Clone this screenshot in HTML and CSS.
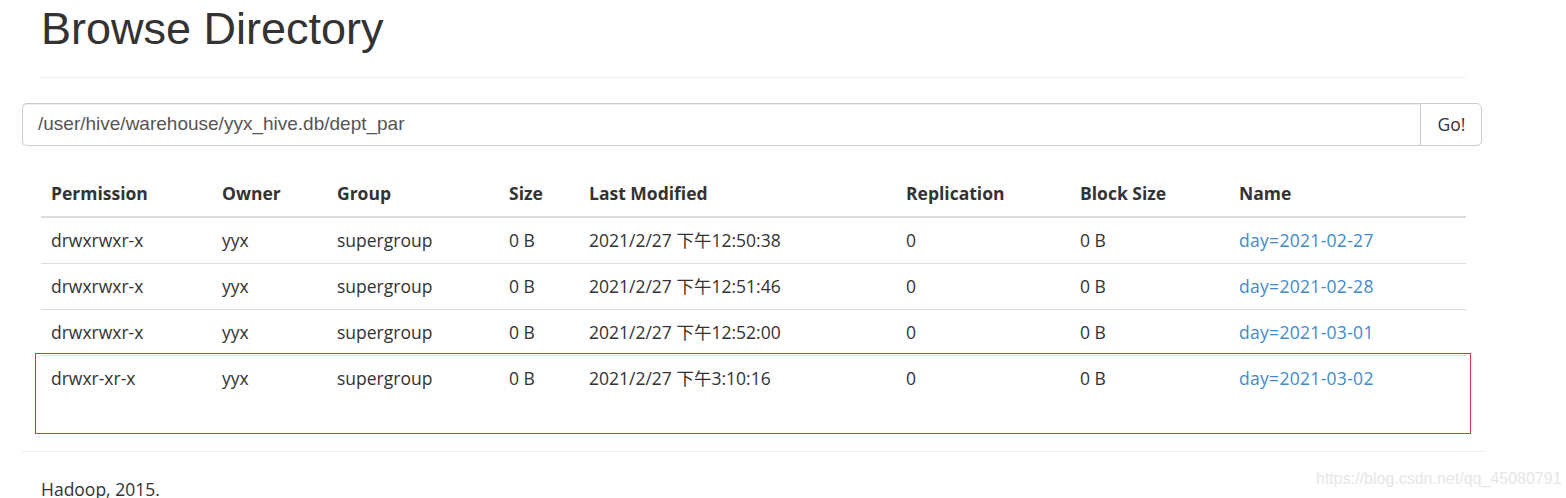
FILE: index.html
```html
<!DOCTYPE html>
<html>
<head>
<meta charset="utf-8">
<title>Browsing HDFS</title>
<link rel="stylesheet" href="styles.css">
</head>
<body>
<div class="container">
  <div class="page-header">
    <h1>Browse Directory</h1>
  </div>
  <div class="row form-row">
    <form class="input-group">
      <input type="text" class="form-control" value="/user/hive/warehouse/yyx_hive.db/dept_par">
      <button class="btn" type="button">Go!</button>
    </form>
  </div>
  <div class="spacer"></div>
  <table class="table">
    <colgroup>
      <col class="c1"><col class="c2"><col class="c3"><col class="c4"><col class="c5"><col class="c6"><col class="c7"><col class="c8">
    </colgroup>
    <thead>
      <tr><th>Permission</th><th>Owner</th><th>Group</th><th>Size</th><th>Last Modified</th><th>Replication</th><th>Block Size</th><th>Name</th></tr>
    </thead>
    <tbody>
      <tr><td>drwxrwxr-x</td><td>yyx</td><td>supergroup</td><td>0 B</td><td>2021/2/27 下午12:50:38</td><td>0</td><td>0 B</td><td><a href="#">day=2021-02-27</a></td></tr>
      <tr><td>drwxrwxr-x</td><td>yyx</td><td>supergroup</td><td>0 B</td><td>2021/2/27 下午12:51:46</td><td>0</td><td>0 B</td><td><a href="#">day=2021-02-28</a></td></tr>
      <tr><td>drwxrwxr-x</td><td>yyx</td><td>supergroup</td><td>0 B</td><td>2021/2/27 下午12:52:00</td><td>0</td><td>0 B</td><td><a href="#">day=2021-03-01</a></td></tr>
      <tr><td>drwxr-xr-x</td><td>yyx</td><td>supergroup</td><td>0 B</td><td>2021/2/27 下午3:10:16</td><td>0</td><td>0 B</td><td><a href="#">day=2021-03-02</a></td></tr>
    </tbody>
  </table>
  <div class="row footer-row">
    <hr>
    <div class="col"><p>Hadoop, 2015.</p></div>
  </div>
</div>
<div class="annotation"></div>
<div class="watermark">https://blog.csdn.net/qq_45080791</div>
</body>
</html>
```

FILE: styles.css
```css
html, body {
  margin: 0;
  padding: 0;
  background: #fff;
  overflow: hidden;
}
body {
  width: 1566px;
  height: 498px;
  position: relative;
  font-family: "Open Sans", "Noto Sans CJK SC", sans-serif;
  font-size: 17.5px;
  line-height: 25px;
  color: #333;
}
.container {
  width: 1425px;
  margin-left: 41px;
  margin-top: -21.25px;
}
.page-header {
  margin: 0 0 25px;
  padding-bottom: 11.25px;
  border-bottom: 1px solid #eee;
}
.page-header h1 {
  margin: 25px 0 12.5px;
  font-family: "Liberation Sans", Arial, sans-serif;
  font-weight: 400;
  font-size: 45px;
  line-height: 49.5px;
  color: #333;
}
.row {
  margin: 0 -18.75px;
  display: flow-root;
}
.form-row {
  margin: 0 0 0 -19px;
  width: 1460px;
}
.input-group {
  display: flex;
  margin: 0;
}
.form-control {
  flex: 1;
  height: 42.5px;
  box-sizing: border-box;
  padding: 7.5px 15px;
  font-family: "Liberation Sans", Arial, sans-serif;
  font-size: 19px;
  color: #555;
  border: 1px solid #ccc;
  border-right: 0;
  border-radius: 5px 0 0 5px;
  box-shadow: inset 0 1px 1px rgba(0,0,0,.075);
  outline: none;
  margin: 0;
}
.btn {
  width: 62px;
  height: 42.5px;
  box-sizing: border-box;
  margin: 0;
  padding: 0 0 0 1px;
  font-family: "Open Sans", sans-serif;
  font-size: 17.5px;
  color: #333;
  background: #fff;
  border: 1px solid #ccc;
  border-radius: 0 5px 5px 0;
}
.spacer {
  height: 25px;
}
.table {
  width: 1425px;
  table-layout: fixed;
  border-collapse: collapse;
  border-spacing: 0;
  margin-bottom: 25px;
}
.c1 { width: 171px; }
.c2 { width: 115px; }
.c3 { width: 172px; }
.c4 { width: 80px; }
.c5 { width: 317px; }
.c6 { width: 174px; }
.c7 { width: 159px; }
.c8 { width: 237px; }
.table th, .table td {
  padding: 10px;
  text-align: left;
  vertical-align: top;
  line-height: 25px;
  white-space: nowrap;
}
.table th {
  font-weight: 700;
  border-bottom: 2.5px solid #ddd;
}
.table td {
  border-top: 1.25px solid #ddd;
}
.table thead + tbody tr:first-child td {
  border-top: 0;
}
.table a {
  color: #428bca;
  text-decoration: none;
  letter-spacing: 0.3px;
}
.footer-row hr {
  margin: 25px 0;
  border: 0;
  border-top: 1.25px solid #eee;
}
.footer-row .col {
  padding: 0 18.75px;
}
.footer-row p {
  margin: 0;
}
.annotation {
  position: absolute;
  left: 35px;
  top: 353px;
  width: 1436px;
  height: 81px;
  border: 1.5px solid rgb(228, 52, 56);
  box-sizing: border-box;
}
.watermark {
  position: absolute;
  left: 1316px;
  top: 469px;
  font-family: "Liberation Sans", Arial, sans-serif;
  font-size: 16px;
  line-height: 20px;
  color: #e6e6e6;
  white-space: nowrap;
}
```
